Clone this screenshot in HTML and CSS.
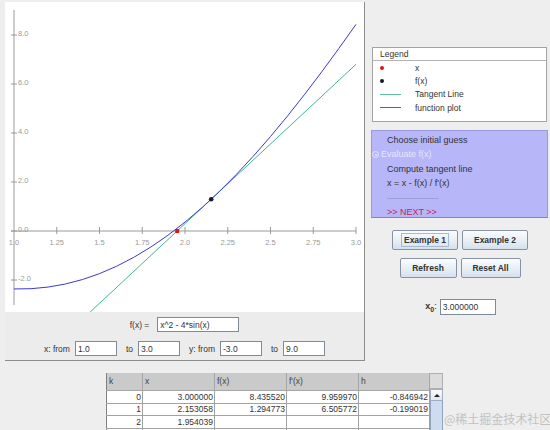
FILE: index.html
```html
<!DOCTYPE html>
<html lang="en">
<head>
  <meta charset="UTF-8">
  <title>Newton's Method</title>
  <link rel="stylesheet" href="styles.css">
</head>
<body>

  <div class="top">
    <div class="plot-panel">
      <svg class="plot" width="359" height="310" viewBox="5 2 359 310">
        <rect x="5" y="2" width="359" height="310" fill="#fff"/>
        <g stroke="#9a9a9a" stroke-width="1">
          <line x1="14" y1="10" x2="14" y2="305"/>
          <line x1="11" y1="231" x2="356" y2="231"/>
          <line x1="11" y1="35" x2="17" y2="35"/>
          <line x1="11" y1="84" x2="17" y2="84"/>
          <line x1="11" y1="133" x2="17" y2="133"/>
          <line x1="11" y1="182" x2="17" y2="182"/>
          <line x1="11" y1="231" x2="17" y2="231"/>
          <line x1="11" y1="280" x2="17" y2="280"/>
          <line x1="56.75" y1="227" x2="56.75" y2="234"/>
          <line x1="99.5" y1="227" x2="99.5" y2="234"/>
          <line x1="142.25" y1="227" x2="142.25" y2="234"/>
          <line x1="185" y1="227" x2="185" y2="234"/>
          <line x1="227.75" y1="227" x2="227.75" y2="234"/>
          <line x1="270.5" y1="227" x2="270.5" y2="234"/>
          <line x1="313.25" y1="227" x2="313.25" y2="234"/>
          <line x1="356" y1="227" x2="356" y2="234"/>
        </g>
        <g class="tick-y">
          <text x="18" y="35.5">8.0</text>
          <text x="18" y="84.5">6.0</text>
          <text x="18" y="133.5">4.0</text>
          <text x="18" y="182.5">2.0</text>
          <text x="18" y="231.5">0.0</text>
          <text x="18" y="280.5">-2.0</text>
        </g>
        <g class="tick-x">
          <text x="14" y="245">1.0</text>
          <text x="56.75" y="245">1.25</text>
          <text x="99.5" y="245">1.5</text>
          <text x="142.25" y="245">1.75</text>
          <text x="185" y="245">2.0</text>
          <text x="227.75" y="245">2.25</text>
          <text x="270.5" y="245">2.5</text>
          <text x="313.25" y="245">2.75</text>
          <text x="356" y="245">3.0</text>
        </g>
        <line x1="90.2" y1="312" x2="356" y2="64.3" stroke="#3fb592" stroke-width="1"/>
        <polyline fill="none" stroke="#3c38d4" stroke-width="1"
          points="14,288.96 31.1,288.69 48.2,287.06 65.3,284.02 82.4,279.55 99.5,273.63 116.6,266.24 133.7,257.38 150.8,247.06 167.9,235.29 185,222.11 202.1,207.55 219.2,191.65 236.3,174.47 253.4,156.08 270.5,136.53 287.6,115.9 304.7,94.28 321.8,71.75 338.9,48.4 356,24.33"/>
        <rect x="175.2" y="229" width="4" height="4" fill="#e01414"/>
        <circle cx="211.2" cy="199.3" r="2.3" fill="#1b1830"/>
      </svg>

      <div class="controls">
        <div class="row">
          <span class="lbl fx">f(x) =</span>
          <input class="field wide" value="x^2 - 4*sin(x)">
        </div>
        <div class="row">
          <span class="lbl">x: from</span>
          <input class="field" value="1.0">
          <span class="lbl">to</span>
          <input class="field" value="3.0">
          <span class="lbl">y: from</span>
          <input class="field" value="-3.0">
          <span class="lbl">to</span>
          <input class="field last" value="9.0">
        </div>
      </div>
    </div>

    <div class="side">
      <div class="legend">
        <div class="legend-title">Legend</div>
        <div class="legend-body">
          <div class="item"><span class="sym"><i class="dot red"></i></span>x</div>
          <div class="item"><span class="sym"><i class="dot dark"></i></span>f(x)</div>
          <div class="item"><span class="sym"><i class="line green"></i></span>Tangent Line</div>
          <div class="item"><span class="sym"><i class="line blue"></i></span>function plot</div>
        </div>
      </div>

      <div class="steps">
        <div class="step">Choose initial guess</div>
        <div class="step current"><i class="radio"></i>Evaluate f(x)</div>
        <div class="step">Compute tangent line</div>
        <div class="step">x = x - f(x) / f'(x)</div>
        <div class="step dashes">-------------------------------</div>
        <div class="step next">&gt;&gt; NEXT &gt;&gt;</div>
      </div>

      <div class="buttons first">
        <button class="btn ex"><span class="focus">Example 1</span></button>
        <button class="btn ex">Example 2</button>
      </div>
      <div class="buttons">
        <button class="btn refresh">Refresh</button>
        <button class="btn reset">Reset All</button>
      </div>

      <div class="x0">
        <span class="x0-lbl"><b>x<sub>0</sub></b>:</span>
        <input class="field x0-field" value="3.000000">
      </div>
    </div>
  </div>

  <div class="table-wrap">
    <table class="iters">
      <tr>
        <th class="c-k">k</th>
        <th class="c-n">x</th>
        <th class="c-n">f(x)</th>
        <th class="c-n">f'(x)</th>
        <th class="c-h">h</th>
      </tr>
      <tr><td>0</td><td>3.000000</td><td>8.435520</td><td>9.959970</td><td>-0.846942</td></tr>
      <tr><td>1</td><td>2.153058</td><td>1.294773</td><td>6.505772</td><td>-0.199019</td></tr>
      <tr><td>2</td><td>1.954039</td><td></td><td></td><td></td></tr>
      <tr><td></td><td></td><td></td><td></td><td></td></tr>
    </table>
    <div class="scrollbar">
      <div class="corner"></div>
      <div class="arrow"><i class="tri"></i></div>
      <div class="thumb"></div>
    </div>
  </div>

  <div class="watermark">@稀土掘金技术社区</div>

</body>
</html>
```

FILE: styles.css
```css
html, body {
  margin: 0;
  padding: 0;
}
body {
  background-color: #eeeeee;
  font-family: 'Liberation Sans', Arial, sans-serif;
  font-size: 8.5px;
  color: #333;
  width: 550px;
  height: 430px;
  overflow: hidden;
  position: relative;
}
.top {
  display: flex;
  padding-top: 2px;
}

/* plot panel */
.plot-panel {
  margin-left: 5px;
  width: 359px;
  border-right: 1px solid #8c8c8c;
  border-bottom: 1px solid #8c8c8c;
  background: #ececec;
}
.plot {
  display: block;
}
.tick-y text, .tick-x text {
  font-family: 'Liberation Sans', Arial, sans-serif;
  font-size: 7.5px;
  fill: #9a9a9a;
}
.tick-x text {
  text-anchor: middle;
}
.controls {
  padding: 5px 0 4px;
  display: flex;
  flex-direction: column;
  gap: 9px;
}
.row {
  display: flex;
  justify-content: center;
  align-items: center;
  height: 15px;
}
.lbl {
  margin-right: 5px;
  color: #333;
}
.lbl.fx {
  margin-right: 8px;
}
.field {
  box-sizing: border-box;
  height: 15px;
  width: 42px;
  margin: 0 9px 0 0;
  padding: 0 2px;
  border: 1px solid #7d8a98;
  background: #fff;
  font-family: 'Liberation Sans', Arial, sans-serif;
  font-size: 8.5px;
  color: #333;
  outline: none;
}
.field.wide {
  width: 82px;
  margin-right: 0;
}
.field.last {
  margin-right: 0;
}

/* right column */
.side {
  width: 185px;
  display: flex;
  flex-direction: column;
}
.legend {
  margin: 45px 0 0 7px;
  width: 175px;
  box-sizing: border-box;
  border: 1px solid #a4a4a4;
  background: #fff;
  font-size: 8.5px;
}
.legend-title {
  height: 12px;
  line-height: 12px;
  padding-left: 7px;
  border-bottom: 1px solid #b4b4b4;
}
.legend-body {
  padding: 0 0 6px 7px;
}
.item {
  display: flex;
  align-items: center;
  height: 13.4px;
}
.sym {
  width: 35px;
  height: 100%;
  display: flex;
  align-items: center;
}
.dot {
  width: 4px;
  height: 4px;
  border-radius: 50%;
}
.dot.red { background: #e01414; }
.dot.dark { background: #1b1830; }
.line {
  display: block;
  width: 21px;
  height: 1px;
}
.line.green { background: #5cc0a0; }
.line.blue { background: #5450f0; }

.steps {
  margin: 8px 0 0 6px;
  width: 177px;
  height: 88px;
  box-sizing: border-box;
  background: #b6b6f8;
  border: 1px solid #9a9ad8;
  border-bottom-color: #8282c2;
  padding: 2.5px 0 0 15px;
  font-size: 9px;
}
.step {
  height: 14.4px;
  line-height: 14.4px;
  color: #333;
}
.step.current {
  margin-left: -15px;
  display: flex;
  align-items: center;
  color: #e6e6fb;
}
.radio {
  width: 5px;
  height: 5px;
  border: 1px solid #e6e6fb;
  border-radius: 50%;
  margin-right: 2px;
  position: relative;
}
.radio::after {
  content: "";
  position: absolute;
  left: 1.5px;
  top: 1.5px;
  width: 2px;
  height: 2px;
  border-radius: 50%;
  background: #e6e6fb;
}
.step.dashes {
  font-size: 5px;
  color: #6c6c94;
  overflow: hidden;
  width: 62px;
  white-space: nowrap;
}
.step.next {
  color: #c8245a;
}

.buttons {
  display: flex;
  justify-content: center;
  gap: 4px;
  padding-left: 5px;
  margin-top: 8px;
}
.buttons.first {
  margin-top: 12px;
}
.btn {
  box-sizing: border-box;
  height: 20px;
  padding: 0;
  border: 1px solid #8494a6;
  border-radius: 2px;
  background: linear-gradient(#fbfdff, #d6e1ed);
  font-family: 'Liberation Sans', Arial, sans-serif;
  font-weight: bold;
  font-size: 8.5px;
  color: #333;
}
.btn.ex { width: 66px; }
.btn.refresh { width: 57px; }
.btn.reset { width: 60px; }
.focus {
  display: inline-block;
  border: 1px solid #a6bad0;
  padding: 1px 2px;
  line-height: 10px;
}

.x0 {
  display: flex;
  justify-content: center;
  align-items: center;
  padding-left: 6px;
  margin-top: 21px;
}
.x0-lbl {
  margin-right: 3px;
  font-size: 9px;
}
.x0-lbl sub {
  font-size: 7px;
}
.field.x0-field {
  width: 56px;
  height: 16px;
  margin: 0;
}

/* iteration table */
.table-wrap {
  display: flex;
  margin: 12px 0 0 106px;
}
.iters {
  border-collapse: collapse;
  table-layout: fixed;
  width: 324px;
  font-size: 8.5px;
}
.iters th {
  height: 15px;
  background: #cacaca;
  border: 1px solid #a6a6a6;
  border-top: 0;
  font-weight: normal;
  text-align: left;
  padding: 0 2px;
  color: #444;
}
.iters th:first-child, .iters td:first-child {
  border-left: 1px solid #808080;
}
.c-k { width: 31px; }
.c-n { width: 67px; }
.c-h { width: 66px; }
.iters td {
  height: 10.5px;
  background: #fff;
  border: 1px solid #a2a2a2;
  text-align: right;
  padding: 0 1px;
  line-height: 10px;
  color: #333;
}
.scrollbar {
  width: 13px;
  display: flex;
  flex-direction: column;
}
.corner {
  height: 16px;
  box-sizing: border-box;
  background: #dcdcdc;
  border: 1px solid #b0b0b0;
  border-left: 0;
}
.arrow {
  height: 12px;
  box-sizing: border-box;
  background: linear-gradient(#fbfdff, #dfe7f0);
  border: 1px solid #a0aebf;
  display: flex;
  justify-content: center;
  align-items: center;
}
.tri {
  width: 0;
  height: 0;
  border-left: 3px solid transparent;
  border-right: 3px solid transparent;
  border-bottom: 3px solid #222;
}
.thumb {
  flex: 1;
  min-height: 40px;
  background: #cddcee;
  border: 1px solid #8fa4bb;
  border-top: 0;
}

.watermark {
  position: absolute;
  left: 444px;
  top: 410px;
  font-family: 'Noto Sans CJK SC', sans-serif;
  font-size: 12px;
  color: #c2c2c2;
  white-space: nowrap;
}
```
